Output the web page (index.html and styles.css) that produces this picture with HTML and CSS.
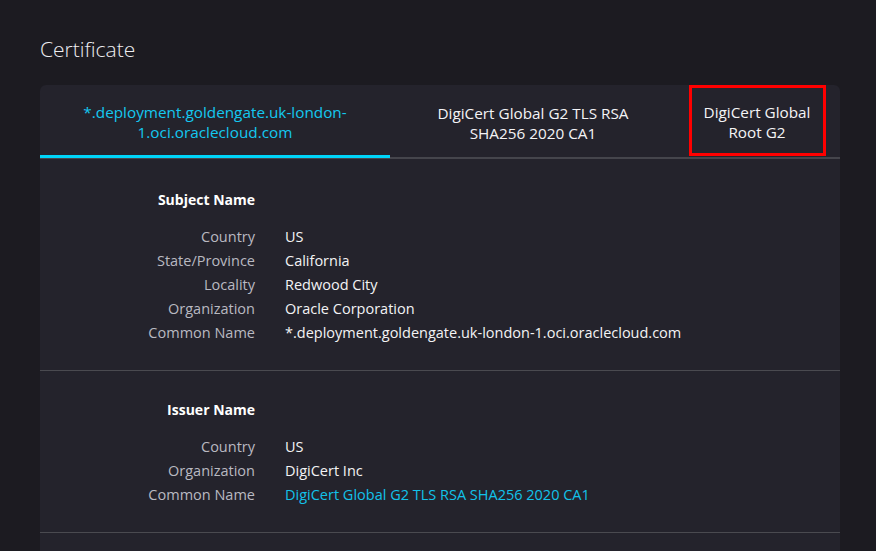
FILE: index.html
```html
<!DOCTYPE html>
<html>
<head>
<meta charset="utf-8">
<link rel="stylesheet" href="styles.css">
</head>
<body>
<div class="page">
  <h1 class="title">Certificate</h1>
  <div class="panel">
    <div class="tabs">
      <div class="tab tab-1 active">*.deployment.goldengate.uk-london-<br>1.oci.oraclecloud.com</div>
      <div class="tab tab-2">DigiCert Global G2 TLS RSA<br>SHA256 2020 CA1</div>
      <div class="tab tab-3"><span class="hl">DigiCert Global<br>Root G2</span></div>
    </div>
    <div class="section">
      <div class="row head"><div class="label">Subject Name</div><div class="value"></div></div>
      <div class="rows">
        <div class="row"><div class="label">Country</div><div class="value">US</div></div>
        <div class="row"><div class="label">State/Province</div><div class="value">California</div></div>
        <div class="row"><div class="label">Locality</div><div class="value">Redwood City</div></div>
        <div class="row"><div class="label">Organization</div><div class="value">Oracle Corporation</div></div>
        <div class="row"><div class="label">Common Name</div><div class="value">*.deployment.goldengate.uk-london-1.oci.oraclecloud.com</div></div>
      </div>
    </div>
    <div class="section second">
      <div class="row head"><div class="label">Issuer Name</div><div class="value"></div></div>
      <div class="rows">
        <div class="row"><div class="label">Country</div><div class="value">US</div></div>
        <div class="row"><div class="label">Organization</div><div class="value">DigiCert Inc</div></div>
        <div class="row"><div class="label">Common Name</div><div class="value link">DigiCert Global G2 TLS RSA SHA256 2020 CA1</div></div>
      </div>
    </div>
    <div class="section short"></div>
  </div>
</div>
</body>
</html>
```
FILE: styles.css
```css
html, body {
  margin: 0;
  padding: 0;
  background: #1c1b21;
  height: 100%;
  overflow: hidden;
}
body {
  font-family: "Open Sans", "Noto Sans", sans-serif;
  color: #f2f2f4;
  font-size: 14px;
}
.page {
  padding: 35px 36px 0 40px;
}
.title {
  margin: 0;
  font-size: 21px;
  font-weight: 300;
  line-height: 28px;
  color: #ededf0;
}
.panel {
  margin-top: 22px;
  background: #24232c;
  border-radius: 6px 6px 0 0;
  width: 800px;
  min-height: 460px;
}
.tabs {
  display: flex;
  border-bottom: 2px solid #45454c;
  height: 72px;
}
.tab {
  display: flex;
  align-items: center;
  justify-content: center;
  text-align: center;
  line-height: 20px;
  font-size: 15.3px;
  color: #f4f4f6;
  box-sizing: border-box;
  padding-top: 3px;
}
.tab-1 { width: 350px; }
.tab-2 { width: 286px; }
.tab-3 { width: 162px; }
.tab.active {
  color: #14c8f0;
  border-bottom: 3px solid #00d4f8;
  margin-bottom: -1px;
}
.hl {
  display: flex;
  align-items: center;
  justify-content: center;
  width: 137px;
  height: 71px;
  box-sizing: border-box;
  border: 3.5px solid #ff0000;
  margin-top: -4px;
  padding-top: 2px;
}
.section {
  border-bottom: 1px solid #4a4a50;
  padding: 29px 0 25px;
}
.section.second { padding-top: 27px; }
.section.short { border-bottom: none; }
.row {
  display: flex;
  line-height: 24px;
  font-size: 14.5px;
}
.row .label {
  width: 215px;
  text-align: right;
  color: #b9b9c1;
}
.row .value {
  margin-left: 30px;
  color: #f3f3f5;
}
.row.head {
  margin-bottom: 13px;
}
.row.head .label {
  color: #ffffff;
  font-weight: 700;
  font-size: 14px;
}
.value.link { color: #12c2ea; }
```
